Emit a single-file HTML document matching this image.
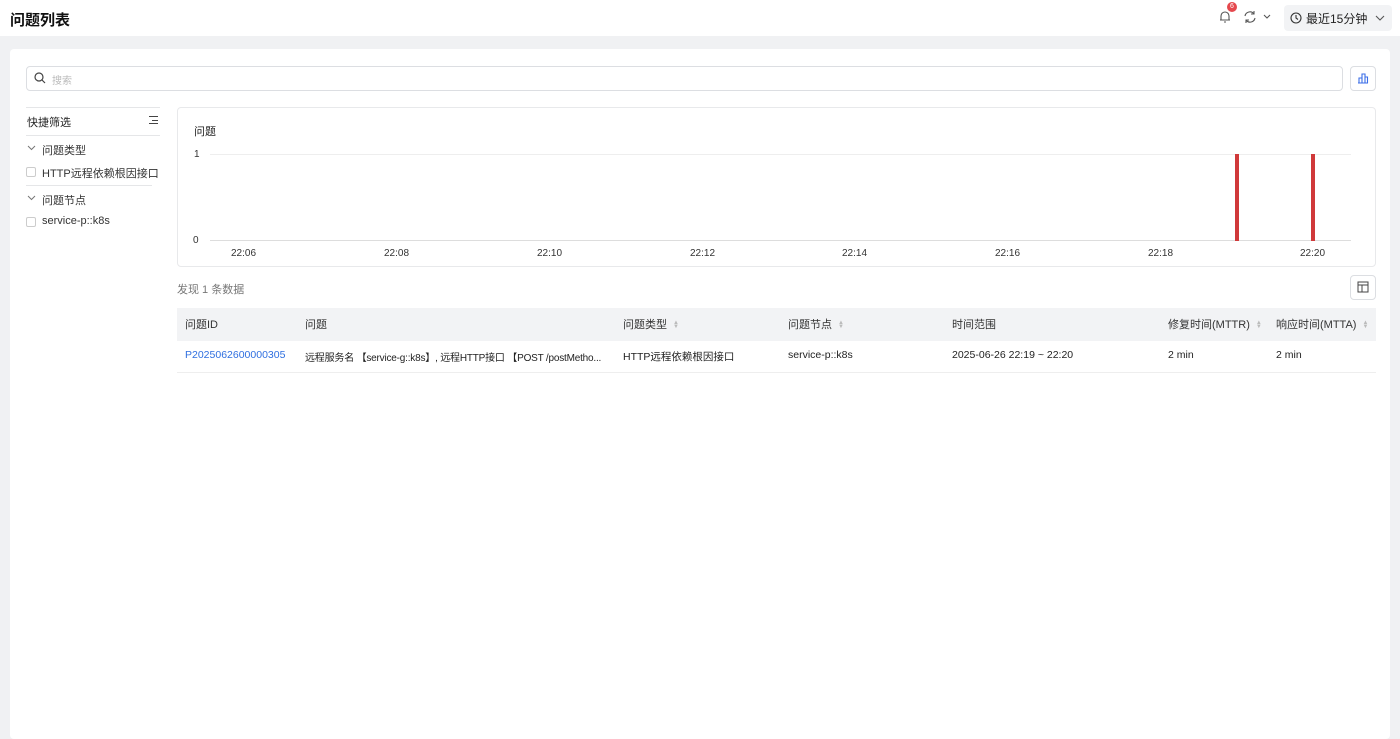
<!DOCTYPE html><html><head><meta charset="utf-8"><style>
*{box-sizing:border-box;margin:0;padding:0}
body{width:1400px;height:730px;background:#f0f1f3;font-family:"Liberation Sans","Noto Sans CJK SC",sans-serif;font-size:12px;color:#222;position:relative;overflow:hidden}
.a{position:absolute}
.hdr{left:0;top:0;width:1400px;height:36px;background:#fff}
.card{left:10px;top:49px;width:1380px;height:690px;background:#fff;border-radius:4px}
.th{color:#333}
.sort{display:inline-block;width:7px;margin-left:6px;vertical-align:middle;line-height:4px;font-size:6px;color:#bbb}
</style></head><body>
<div class="a hdr"></div>
<div class="a" style="left:10px;top:9px;font-size:15px;font-weight:bold;color:#111">问题列表</div>
<svg class="a" style="left:1218px;top:10px" width="14" height="14" viewBox="0 0 14 14" fill="none" stroke="#555" stroke-width="1.1"><path d="M3 10V6a4 4 0 0 1 8 0v4H3zM2 10h10M6 12h2"/></svg>
<div class="a" style="left:1227px;top:2px;width:10px;height:10px;border-radius:5px;background:#e5484d;color:#fff;font-size:7px;text-align:center;line-height:10px">6</div>
<svg class="a" style="left:1243px;top:10px" width="30" height="14" viewBox="0 0 30 14" fill="none" stroke="#555" stroke-width="1.1"><path d="M2 6a5 5 0 0 1 9-2M12 8a5 5 0 0 1-9 2M11 1v3H8M3 13v-3h3"/><path d="M21 5l3 3 3-3"/></svg>
<div class="a" style="left:1284px;top:5px;width:108px;height:26px;background:#f2f3f5;border-radius:4px"></div>
<svg class="a" style="left:1290px;top:12px" width="12" height="12" viewBox="0 0 12 12" fill="none" stroke="#333" stroke-width="1.1"><circle cx="6" cy="6" r="5"/><path d="M6 3v3l2 1.5"/></svg>
<div class="a" style="left:1306px;top:10px;font-size:12px;color:#222">最近15分钟</div>
<svg class="a" style="left:1375px;top:14px" width="10" height="8" viewBox="0 0 10 8" fill="none" stroke="#555" stroke-width="1.1"><path d="M1 2l4 4 4-4"/></svg>
<div class="a card"></div>
<div class="a" style="left:26px;top:66px;width:1317px;height:25px;border:1px solid #dcdee2;border-radius:4px"></div>
<svg class="a" style="left:34px;top:72px" width="12" height="12" viewBox="0 0 12 12" fill="none" stroke="#444" stroke-width="1.2"><circle cx="5" cy="5" r="4"/><path d="M8 8l3 3"/></svg>
<div class="a" style="left:52px;top:72px;color:#bbb;font-size:10px">搜索</div>
<div class="a" style="left:1350px;top:66px;width:26px;height:25px;border:1px solid #dcdee2;border-radius:4px"></div>
<svg class="a" style="left:1357px;top:72px" width="12" height="12" viewBox="0 0 12 12" fill="none" stroke="#3b6ee8" stroke-width="1.1"><path d="M1 11h10M2 11V6h3v5M5 11V2h3v9M8 11V5h2.5v6"/></svg>
<div class="a" style="left:26px;top:107px;width:134px;border-top:1px solid #e5e6e8"></div>
<div class="a" style="left:27px;top:114px;font-size:11px">快捷筛选</div>
<div class="a" style="left:149px;top:116px;width:9px;height:8px;border-top:1px solid #444;border-bottom:1px solid #444"></div><div class="a" style="left:152px;top:120px;width:6px;border-top:1px solid #444"></div>
<div class="a" style="left:26px;top:135px;width:134px;border-top:1px solid #e5e6e8"></div>
<svg class="a" style="left:27px;top:145px" width="9" height="6" viewBox="0 0 9 6" fill="none" stroke="#777" stroke-width="1"><path d="M1 1l3.5 3.5L8 1"/></svg>
<div class="a" style="left:42px;top:142px;font-size:11px;color:#333">问题类型</div>
<div class="a" style="left:26px;top:167px;width:10px;height:10px;border:1px solid #ccc;border-radius:2px"></div>
<div class="a" style="left:42px;top:165px;font-size:11px;color:#333">HTTP远程依赖根因接口</div>
<div class="a" style="left:26px;top:185px;width:126px;border-top:1px solid #e5e6e8"></div>
<svg class="a" style="left:27px;top:195px" width="9" height="6" viewBox="0 0 9 6" fill="none" stroke="#777" stroke-width="1"><path d="M1 1l3.5 3.5L8 1"/></svg>
<div class="a" style="left:42px;top:192px;font-size:11px;color:#333">问题节点</div>
<div class="a" style="left:26px;top:217px;width:10px;height:10px;border:1px solid #ccc;border-radius:2px"></div>
<div class="a" style="left:42px;top:215px;font-size:11px;color:#333">service-p::k8s</div>
<div class="a" style="left:177px;top:107px;width:1199px;height:160px;border:1px solid #e8e9eb;border-radius:4px"></div>
<div class="a" style="left:194px;top:123px;font-size:11px">问题</div>
<div class="a" style="left:194px;top:149px;font-size:10px;color:#333">1</div>
<div class="a" style="left:193px;top:235px;font-size:10px;color:#333">0</div>
<div class="a" style="left:210px;top:154px;width:1141px;border-top:1px solid #eee"></div>
<div class="a" style="left:210px;top:240px;width:1141px;border-top:1px solid #ddd"></div>
<div class="a" style="left:1235px;top:154px;width:4px;height:87px;background:#d0393a"></div>
<div class="a" style="left:1311px;top:154px;width:4px;height:87px;background:#d0393a"></div>
<div class="a" style="left:231px;top:248px;font-size:10px;color:#333">22:06</div>
<div class="a" style="left:384px;top:248px;font-size:10px;color:#333">22:08</div>
<div class="a" style="left:537px;top:248px;font-size:10px;color:#333">22:10</div>
<div class="a" style="left:690px;top:248px;font-size:10px;color:#333">22:12</div>
<div class="a" style="left:842px;top:248px;font-size:10px;color:#333">22:14</div>
<div class="a" style="left:995px;top:248px;font-size:10px;color:#333">22:16</div>
<div class="a" style="left:1148px;top:248px;font-size:10px;color:#333">22:18</div>
<div class="a" style="left:1300px;top:248px;font-size:10px;color:#333">22:20</div>
<div class="a" style="left:177px;top:281px;font-size:11px;color:#777">发现 1 条数据</div>
<div class="a" style="left:1350px;top:275px;width:26px;height:25px;border:1px solid #dcdee2;border-radius:4px"></div>
<svg class="a" style="left:1357px;top:281px" width="12" height="12" viewBox="0 0 12 12" fill="none" stroke="#444" stroke-width="1"><rect x="1" y="1" width="10" height="10"/><path d="M1 4h10M5 4v7"/></svg>
<div class="a" style="left:177px;top:308px;width:1199px;height:33px;background:#f2f3f5"></div>
<div class="a" style="left:177px;top:372px;width:1199px;border-top:1px solid #eee"></div>
<div class="a th" style="left:185px;top:316px;font-size:11px">问题ID</div>
<div class="a th" style="left:305px;top:316px;font-size:11px">问题</div>
<div class="a th" style="left:623px;top:316px;font-size:11px">问题类型<span class="sort">▲<br>▼</span></div>
<div class="a th" style="left:788px;top:316px;font-size:11px">问题节点<span class="sort">▲<br>▼</span></div>
<div class="a th" style="left:952px;top:316px;font-size:11px">时间范围</div>
<div class="a th" style="left:1168px;top:316px;font-size:11px">修复时间(MTTR)<span class="sort">▲<br>▼</span></div>
<div class="a th" style="left:1276px;top:316px;font-size:11px">响应时间(MTTA)<span class="sort">▲<br>▼</span></div>
<div class="a" style="left:185px;top:349px;font-size:10.5px;color:#2f6fe0">P2025062600000305</div>
<div class="a" style="left:305px;top:349px;width:298px;white-space:nowrap;overflow:hidden;font-size:10px;letter-spacing:-0.2px">远程服务名 【service-g::k8s】, 远程HTTP接口 【POST /postMetho...</div>
<div class="a" style="left:623px;top:349px;font-size:10.5px">HTTP远程依赖根因接口</div>
<div class="a" style="left:788px;top:349px;font-size:10.5px">service-p::k8s</div>
<div class="a" style="left:952px;top:349px;font-size:10.5px">2025-06-26 22:19 ~ 22:20</div>
<div class="a" style="left:1168px;top:349px;font-size:10.5px">2 min</div>
<div class="a" style="left:1276px;top:349px;font-size:10.5px">2 min</div>
</body></html>
